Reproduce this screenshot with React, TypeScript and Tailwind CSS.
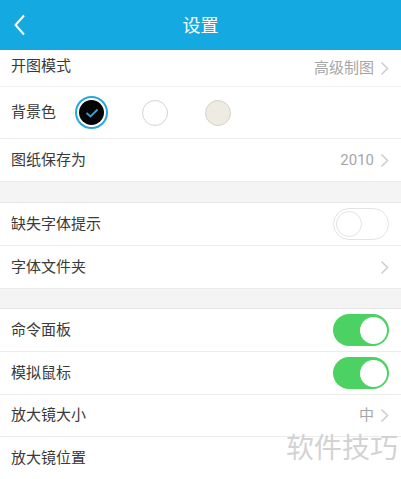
import { ReactNode } from "react";

const font = { fontFamily: 'Roboto, "Noto Sans CJK SC", "Noto Sans", sans-serif' };

function Chevron({ className = "" }: { className?: string }) {
  return (
    <svg width="9" height="15" viewBox="0 0 9 15" className={className}>
      <path d="M1.5 1.5 L7.5 7.5 L1.5 13.5" fill="none" stroke="#cfcfcf" strokeWidth="1.6" />
    </svg>
  );
}

function Toggle({ on }: { on: boolean }) {
  return on ? (
    <div className="w-[56px] h-[32px] rounded-full bg-[#4cd263] flex items-center justify-end pr-[2px]">
      <div className="w-[27px] h-[27px] rounded-full bg-white" />
    </div>
  ) : (
    <div className="w-[56px] h-[32px] rounded-full bg-white border border-[#e3e3e3] flex items-center pl-[2px]">
      <div className="w-[26px] h-[26px] rounded-full bg-white border border-[#e3e3e3]" />
    </div>
  );
}

function Row({ label, right, h = "h-[43px]", last = false }: { label: string; right?: ReactNode; h?: string; last?: boolean }) {
  return (
    <div className={`${h} flex items-center justify-between pl-[11px] pr-[12px] bg-white ${last ? "" : "border-b border-[#ececec]"}`}>
      <span className="text-[15px] text-[#3a3a3a]">{label}</span>
      {right}
    </div>
  );
}

function Value({ text }: { text?: string }) {
  return (
    <div className="flex items-center gap-[6px]">
      {text && <span className="text-[15px] text-[#a6a6a6]">{text}</span>}
      <Chevron />
    </div>
  );
}

export default function App() {
  return (
    <div className="relative w-[401px] h-[479px] overflow-hidden bg-[#f4f4f4]" style={font}>
      {/* header */}
      <div className="relative h-[50px] bg-[#14aae1] flex items-center justify-center">
        <svg width="14" height="22" viewBox="0 0 14 22" className="absolute left-[13px] top-[14px]">
          <path d="M11 1.5 L2.5 11 L11 20.5" fill="none" stroke="white" strokeWidth="2" />
        </svg>
        <span className="text-[18px] text-white">设置</span>
      </div>

      <div className="bg-white">
        <div className="h-[37px] flex items-start justify-between pl-[11px] pr-[12px] pt-[5px] border-b border-[#f2f2f2]">
          <span className="text-[15px] text-[#3a3a3a]">开图模式</span>
          <div className="flex items-center gap-[6px] pt-[2px]">
            <span className="text-[15px] text-[#a6a6a6]">高级制图</span>
            <Chevron />
          </div>
        </div>
        <div className="h-[52px] flex items-center pl-[11px] border-b border-[#ececec]">
          <span className="text-[15px] text-[#3a3a3a]">背景色</span>
          <div className="ml-[19px] w-[33px] h-[33px] rounded-full border-[2px] border-[#27a7dc] p-[2px] bg-white">
            <div className="w-full h-full rounded-full bg-[#050505] flex items-center justify-center">
              <svg width="14" height="10" viewBox="0 0 14 10">
                <path d="M1.5 5 L5.5 8.5 L12.5 1.5" fill="none" stroke="#2aa6d8" strokeWidth="1.8" />
              </svg>
            </div>
          </div>
          <div className="ml-[34px] w-[26px] h-[26px] rounded-full bg-white border border-[#d4d4d4]" />
          <div className="ml-[37px] w-[26px] h-[26px] rounded-full bg-[#eeebe3] border border-[#d6d3ca]" />
        </div>
        <Row label="图纸保存为" right={<Value text="2010" />} h="h-[43px]" />
      </div>

      <div className="h-[20px]" />

      <div className="bg-white border-t border-[#e6e6e6]">
        <Row label="缺失字体提示" right={<Toggle on={false} />} h="h-[43px]" />
        <Row label="字体文件夹" right={<Value />} h="h-[42px]" last />
      </div>

      <div className="h-[20px] border-t border-[#ececec]" />

      <div className="bg-white border-t border-[#e6e6e6]">
        <Row label="命令面板" right={<Toggle on />} />
        <Row label="模拟鼠标" right={<Toggle on />} />
        <Row label="放大镜大小" right={<Value text="中" />} h="h-[42px]" />
        <Row label="放大镜位置" h="h-[43px]" last />
      </div>

      {/* watermark */}
      <span className="absolute right-[3px] top-[428px] text-[28px] text-[#cdcdcd]/90">软件技巧</span>
    </div>
  );
}
